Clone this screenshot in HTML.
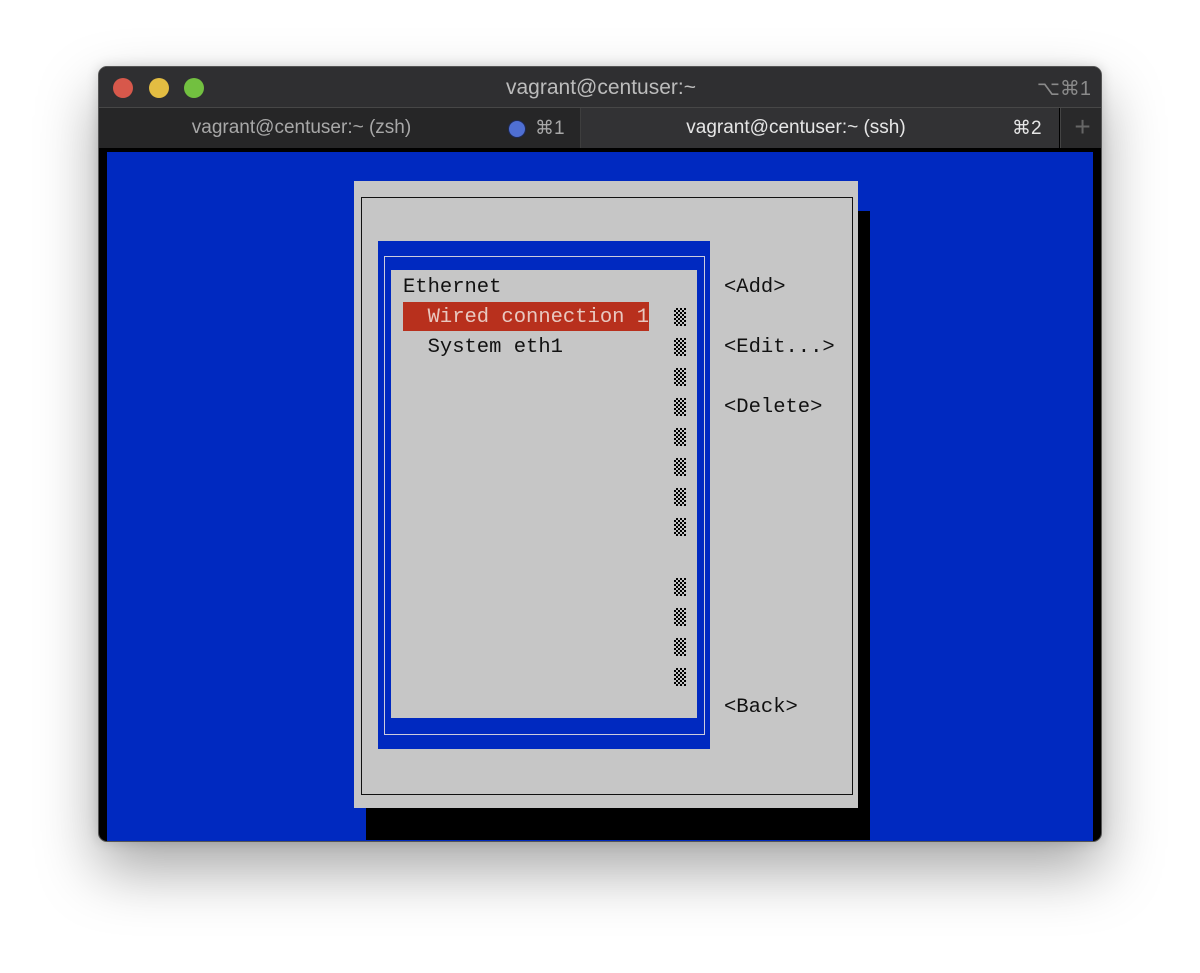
<!DOCTYPE html>
<html><head><style>
body{margin:0;width:1200px;height:973px;background:#fff;position:relative;overflow:hidden;font-family:"Liberation Sans",sans-serif}
.a{position:absolute}
.win{left:98px;top:66px;width:1004px;height:776px;border-radius:9px;background:#000;box-shadow:0 28px 60px rgba(0,0,0,.35),0 0 12px rgba(0,0,0,.15);overflow:hidden;border:1px solid #555;box-sizing:border-box}
.t{font-family:"Liberation Mono","DejaVu Sans Mono",monospace;font-size:20.5px;line-height:30px;color:#111;white-space:pre}
.sb{left:674px;width:12px;height:18px;background:repeating-conic-gradient(#000 0 25%,#c6c6c6 0 50%) 0 0/4px 4px}
</style></head><body>
<div class="a win">
 <div class="a" style="left:0;top:0;width:1004px;height:40px;background:#2f2f31;border-bottom:1px solid #474747"></div>
 <div class="a" style="left:14px;top:11px;width:20px;height:20px;border-radius:50%;background:#d7584b"></div>
 <div class="a" style="left:50px;top:11px;width:20px;height:20px;border-radius:50%;background:#e3bd42"></div>
 <div class="a" style="left:85px;top:11px;width:20px;height:20px;border-radius:50%;background:#72c040"></div>
 <div class="a" style="left:0;top:9px;width:1004px;text-align:center;color:#bcbcbc;font-size:21px">vagrant@centuser:~</div>
 <div class="a" style="right:10px;top:9px;color:#8a8a8a;font-size:20px">⌥⌘1</div>
 <div class="a" style="left:0;top:41px;width:481px;height:40px;background:#262627;border-right:1px solid #3e3e3e"></div>
 <div class="a" style="left:0;top:50px;width:405px;text-align:center;color:#a8a8a8;font-size:19px">vagrant@centuser:~ (zsh)</div>
 <div class="a" style="left:409px;top:53px;width:16px;height:16px;border-radius:50%;background:#4f6fd3;border:1px solid #1e2a55"></div>
 <div class="a" style="left:436px;top:50px;color:#a8a8a8;font-size:19px">⌘1</div>
 <div class="a" style="left:482px;top:41px;width:478px;height:40px;background:#323234"></div>
 <div class="a" style="left:482px;top:50px;width:430px;text-align:center;color:#e6e6e6;font-size:19px">vagrant@centuser:~ (ssh)</div>
 <div class="a" style="left:913px;top:50px;color:#e6e6e6;font-size:19px">⌘2</div>
 <div class="a" style="left:961px;top:41px;width:43px;height:40px;background:#29292a;border-left:1px solid #444;color:#666;font-size:28px;text-align:center;line-height:38px">+</div>
 <div class="a" style="left:8px;top:85px;width:986px;height:689px;background:#0029c0"></div>
</div>
<div class="a" style="left:366px;top:211px;width:504px;height:629px;background:#000"></div>
<div class="a" style="left:354px;top:181px;width:504px;height:627px;background:#c6c6c6"></div>
<div class="a" style="left:361px;top:197px;width:490px;height:596px;border:1px solid #111"></div>
<div class="a" style="left:378px;top:241px;width:332px;height:508px;background:#0029c0"></div>
<div class="a" style="left:384px;top:256px;width:319px;height:477px;border:1px solid #ccd"></div>
<div class="a" style="left:391px;top:270px;width:306px;height:448px;background:#c6c6c6"></div>
<div class="a" style="left:403px;top:302px;width:246px;height:29px;background:#b8301d"></div>
<div class="a t" style="left:403px;top:273px">Ethernet</div>
<div class="a t" style="left:403px;top:303px;color:#e8c8c0">  Wired connection 1</div>
<div class="a t" style="left:403px;top:333px">  System eth1</div>
<div class="a t" style="left:724px;top:273px">&lt;Add&gt;</div>
<div class="a t" style="left:724px;top:333px">&lt;Edit...&gt;</div>
<div class="a t" style="left:724px;top:393px">&lt;Delete&gt;</div>
<div class="a t" style="left:724px;top:693px">&lt;Back&gt;</div>
<div class="a sb" style="top:308px"></div><div class="a sb" style="top:338px"></div><div class="a sb" style="top:368px"></div><div class="a sb" style="top:398px"></div><div class="a sb" style="top:428px"></div><div class="a sb" style="top:458px"></div><div class="a sb" style="top:488px"></div><div class="a sb" style="top:518px"></div><div class="a sb" style="top:578px"></div><div class="a sb" style="top:608px"></div><div class="a sb" style="top:638px"></div><div class="a sb" style="top:668px"></div>
</body></html>
